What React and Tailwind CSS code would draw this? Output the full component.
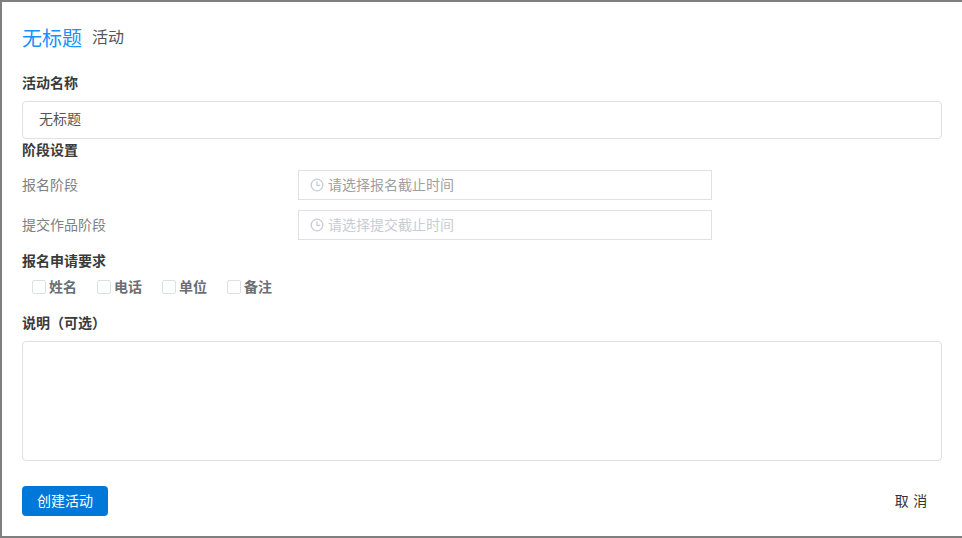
import React from "react";

const font = { fontFamily: '"Noto Sans CJK SC", "Liberation Sans", sans-serif' };

const ClockIcon = () => (
  <svg width="14" height="14" viewBox="0 0 14 14" fill="none" stroke="#c8ccd3" strokeWidth="1.3" className="shrink-0">
    <circle cx="7" cy="7" r="5.8" />
    <path d="M7 3.4V7.3H10.2" />
  </svg>
);

const SectionLabel = ({ children, className = "" }) => (
  <div className={`text-[14px] leading-[18px] pb-[2px] font-bold text-[#3a3a3a] ${className}`}>{children}</div>
);

const DateRow = ({ label, placeholder, muted }) => (
  <div className="flex items-center h-[30px]">
    <div className="w-[276px] pb-[2px] text-[14px] text-[#808080]">{label}</div>
    <div className="w-[414px] h-[30px] border border-[#e0e0e6] flex items-center pl-[11px] gap-[4px]">
      <ClockIcon />
      <span className={`pb-[2px] text-[14px] ${muted ? "text-[#c8ccd3]" : "text-[#a0a0a0]"}`}>{placeholder}</span>
    </div>
  </div>
);

const Check = ({ label }) => (
  <label className="flex items-center gap-[3px] mr-[20px]">
    <span className="w-[14px] h-[14px] border border-[#dcdfe6] rounded-[2px] bg-white" />
    <span className="pb-[2px] text-[14px] font-bold text-[#6b6e73]">{label}</span>
  </label>
);

export default function App() {
  return (
    <div className="h-[538px] bg-[#7f7f7f] pt-[2px] pl-[2px] pb-[2px] overflow-hidden" style={font}>
      <div className="h-full bg-white pl-[20px] pr-[20px] flex flex-col">
        <div className="flex items-center gap-[10px] pt-[22px]">
          <span className="text-[20px] leading-[28px] text-[#1890ff]">无标题</span>
          <span className="text-[16px] leading-[24px] pb-[4px] text-[#555]">活动</span>
        </div>
        <SectionLabel className="mt-[21px]">活动名称</SectionLabel>
        <div className="mt-[8px] h-[38px] border border-[#e0e0e0] rounded-[4px] flex items-center pl-[16px] pb-[4px] text-[14px] text-[#555]">
          无标题
        </div>
        <SectionLabel className="mt-[1px]">阶段设置</SectionLabel>
        <div className="mt-[10px] flex flex-col gap-[10px]">
          <DateRow label="报名阶段" placeholder="请选择报名截止时间" />
          <DateRow label="提交作品阶段" placeholder="请选择提交截止时间" muted />
        </div>
        <SectionLabel className="mt-[11px]">报名申请要求</SectionLabel>
        <div className="mt-[4px] pl-[10px] flex items-center h-[24px]">
          <Check label="姓名" />
          <Check label="电话" />
          <Check label="单位" />
          <Check label="备注" />
        </div>
        <SectionLabel className="mt-[14px]">说明（可选）</SectionLabel>
        <div className="mt-[8px] h-[120px] border border-[#e0e0e0] rounded-[4px]" />
        <div className="mt-[25px] flex items-center justify-between">
          <button className="w-[86px] h-[30px] pb-[2px] bg-[#0078d9] rounded-[4px] text-white text-[14px]">创建活动</button>
          <button className="w-[66px] h-[30px] pb-[2px] mr-[-2px] text-[14px] text-[#333] [word-spacing:1.5px]">取 消</button>
        </div>
      </div>
    </div>
  );
}
